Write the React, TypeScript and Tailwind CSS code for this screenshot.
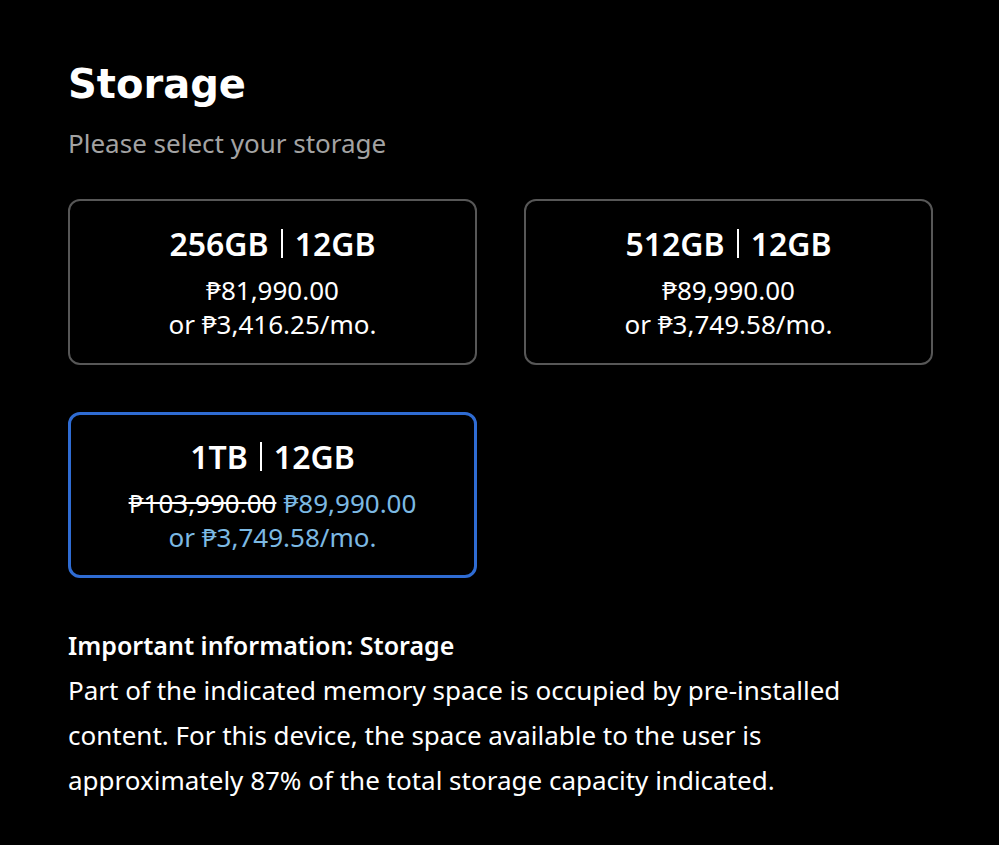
import React from "react";

type Option = {
  label: string;
  price: string;
  monthly: string;
  oldPrice?: string;
  selected?: boolean;
};

const options: Option[] = [
  { label: "256GB | 12GB", price: "₱81,990.00", monthly: "or ₱3,416.25/mo." },
  { label: "512GB | 12GB", price: "₱89,990.00", monthly: "or ₱3,749.58/mo." },
  {
    label: "1TB | 12GB",
    oldPrice: "₱103,990.00",
    price: "₱89,990.00",
    monthly: "or ₱3,749.58/mo.",
    selected: true,
  },
];

const StorageCard = ({ opt }: { opt: Option }) => {
  const [cap, ram] = opt.label.split(" | ");
  return (
    <button
      className={
        opt.selected
          ? "h-[166px] rounded-[12px] border-[3px] border-[#2f6cd3] flex flex-col items-center justify-center"
          : "h-[166px] rounded-[12px] border-2 border-[#575757] flex flex-col items-center justify-center"
      }
    >
      <div className="text-[32px] font-semibold leading-[40px] text-white flex items-center">
        <span>{cap}</span>
        <span className="mx-[12px] inline-block w-[2px] h-[29px] bg-white" />
        <span>{ram}</span>
      </div>
      <div className="mt-[9px] text-[26px] leading-[34px]">
        {opt.oldPrice && (
          <span className="text-white line-through mr-[7px]">{opt.oldPrice}</span>
        )}
        <span className={opt.selected ? "text-[#7cb9e3]" : "text-white"}>{opt.price}</span>
      </div>
      <div className={"text-[26px] leading-[34px] " + (opt.selected ? "text-[#7cb9e3]" : "text-white")}>
        {opt.monthly}
      </div>
    </button>
  );
};

const App = () => {
  return (
    <div
      className="min-h-[845px] w-full bg-black px-[68px] pt-[58px]"
      style={{ fontFamily: '"Noto Sans", "DejaVu Sans", sans-serif' }}
    >
      <h1
        className="text-[40px] font-bold leading-[52px] text-white"
        style={{ fontFamily: '"DejaVu Sans", "Noto Sans", sans-serif' }}
      >
        Storage
      </h1>
      <p className="mt-[16px] text-[26px] leading-[34px] text-[#a3a3a3]">Please select your storage</p>

      <div className="mt-[39px] grid w-[865px] grid-cols-2 gap-x-[47px] gap-y-[47px]">
        {options.map((opt) => (
          <StorageCard key={opt.label} opt={opt} />
        ))}
      </div>

      <div className="mt-[50px] text-white">
        <h2 className="text-[25px] font-semibold leading-[34px]">Important information: Storage</h2>
        <p className="mt-[6px] w-[800px] text-[26px] leading-[45px]">
          Part of the indicated memory space is occupied by pre-installed content. For this device, the
          space available to the user is approximately 87% of the total storage capacity indicated.
        </p>
      </div>
    </div>
  );
};

export default App;
